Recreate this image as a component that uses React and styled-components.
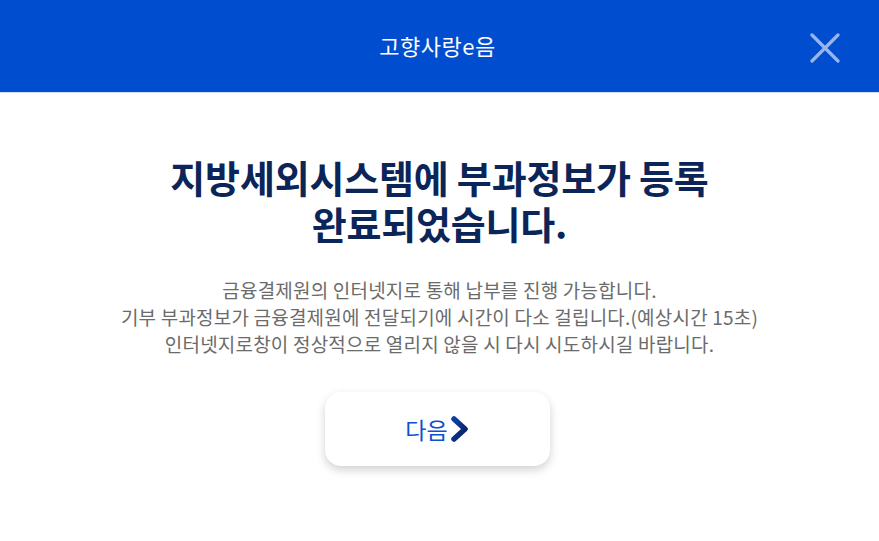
import React from "react";
import styled, { createGlobalStyle } from "styled-components";

const Global = createGlobalStyle`
  html, body { margin: 0; padding: 0; background: #fff; }
  body { font-family: "Noto Sans CJK KR", "Noto Sans", sans-serif; }
`;

const Page = styled.div`
  width: 879px;
  height: 541px;
  background: #fff;
  display: flex;
  flex-direction: column;
`;

const Header = styled.header`
  height: 92px;
  background: #004ecf;
  border-bottom: 1px solid #cfe0f6;
  display: flex;
  align-items: center;
  justify-content: center;
  position: relative;
  flex-shrink: 0;
`;

const HeaderTitle = styled.h1`
  margin: 0 4px 0 0;
  color: #fff;
  font-size: 22px;
  font-weight: 400;
  letter-spacing: 0.5px;
  transform: translateY(-1px);
`;

const CloseButton = styled.button`
  position: absolute;
  right: 38px;
  top: 32px;
  width: 32px;
  height: 32px;
  padding: 0;
  border: 0;
  background: transparent;
  display: flex;
  align-items: center;
  justify-content: center;
  cursor: pointer;
`;

const Body = styled.main`
  display: flex;
  flex-direction: column;
  align-items: center;
  padding-top: 61px;
`;

const Heading = styled.h2`
  margin: 0;
  color: #0b2558;
  font-size: 38px;
  font-weight: 700;
  line-height: 46px;
  letter-spacing: -0.2px;
  text-align: center;
`;

const Description = styled.p`
  margin: 30px 0 0;
  color: #6b6b6b;
  font-size: 19px;
  font-weight: 400;
  line-height: 27px;
  letter-spacing: 0.2px;
  text-align: center;
`;

const NextButton = styled.button`
  margin: 35px 4px 0 0;
  width: 225px;
  height: 74px;
  border: 0;
  border-radius: 16px;
  background: #fff;
  box-shadow: 0 4px 10px rgba(0, 0, 0, 0.18);
  display: flex;
  align-items: center;
  justify-content: center;
  gap: 2px;
  font-family: inherit;
  font-size: 23px;
  font-weight: 400;
  color: #0a52d0;
  letter-spacing: 0;
  cursor: pointer;
  padding: 0;
`;

const Chevron = () => (
  <svg width="20" height="26" viewBox="0 0 20 26">
    <defs>
      <linearGradient id="cg" x1="0" y1="0" x2="1" y2="1">
        <stop offset="0" stopColor="#0b3fa8" />
        <stop offset="1" stopColor="#08215e" />
      </linearGradient>
    </defs>
    <path d="M4 3 L15 13 L4 23" fill="none" stroke="url(#cg)" strokeWidth="5.5" strokeLinecap="round" strokeLinejoin="round" />
  </svg>
);

export default function App() {
  return (
    <Page>
      <Global />
      <Header>
        <HeaderTitle>고향사랑e음</HeaderTitle>
        <CloseButton aria-label="닫기">
          <svg width="30" height="30" viewBox="0 0 30 30">
            <path d="M2 2 L28 28 M28 2 L2 28" stroke="#b3c9f0" strokeOpacity="0.85" strokeWidth="3.2" strokeLinecap="round" />
          </svg>
        </CloseButton>
      </Header>
      <Body>
        <Heading>
          지방세외시스템에 부과정보가 등록
          <br />
          완료되었습니다.
        </Heading>
        <Description>
          금융결제원의 인터넷지로 통해 납부를 진행 가능합니다.
          <br />
          기부 부과정보가 금융결제원에 전달되기에 시간이 다소 걸립니다.(예상시간 15초)
          <br />
          인터넷지로창이 정상적으로 열리지 않을 시 다시 시도하시길 바랍니다.
        </Description>
        <NextButton>
          다음
          <Chevron />
        </NextButton>
      </Body>
    </Page>
  );
}
